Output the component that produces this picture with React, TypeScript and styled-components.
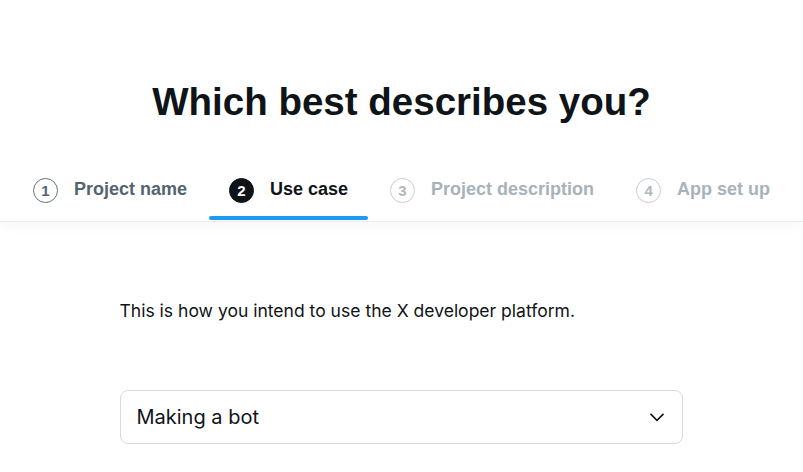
import React from "react";
import styled, { createGlobalStyle } from "styled-components";

const GlobalStyle = createGlobalStyle`
  html, body { margin: 0; padding: 0; background: #ffffff; }
  body { font-family: "Liberation Sans", Arial, sans-serif; color: #0f1419; }
  * { box-sizing: border-box; }
`;

const Page = styled.div`
  width: 100%;
  min-height: 472px;
  display: flex;
  flex-direction: column;
`;

const Header = styled.header`
  padding-top: 79px;
  display: flex;
  flex-direction: column;
  align-items: center;
  border-bottom: 1px solid #eaecee;
  box-shadow: 0 3px 14px rgba(0, 0, 0, 0.035);
`;

const Title = styled.h1`
  margin: 0;
  font-family: "Liberation Sans", Arial, sans-serif;
  font-weight: 700;
  font-size: 38.5px;
  line-height: 46px;
  color: #0f1419;
`;

const Tabs = styled.nav`
  margin-top: 44px;
  display: flex;
  justify-content: center;
  gap: 2px;
`;

type Status = "done" | "active" | "todo";

const TabItem = styled.div`
  display: flex;
  flex-direction: column;
`;

const TabRow = styled.div`
  height: 40px;
  padding: 0 20px;
  display: flex;
  align-items: center;
  gap: 16px;
`;

const Circle = styled.span<{ $status: Status }>`
  width: 25px;
  height: 25px;
  border-radius: 50%;
  display: flex;
  align-items: center;
  justify-content: center;
  font-family: "Liberation Sans", Arial, sans-serif;
  font-weight: 700;
  font-size: 15px;
  margin-top: 3px;
  border: 1.5px solid
    ${(p) => (p.$status === "active" ? "#0f1419" : p.$status === "done" ? "#66727c" : "#c7cdd2")};
  background: ${(p) => (p.$status === "active" ? "#0f1419" : "#ffffff")};
  color: ${(p) => (p.$status === "active" ? "#ffffff" : p.$status === "done" ? "#536471" : "#b0b8be")};
`;

const TabLabel = styled.span<{ $status: Status }>`
  font-family: "Liberation Sans", Arial, sans-serif;
  font-weight: 700;
  font-size: 18px;
  margin-top: 1px;
  color: ${(p) => (p.$status === "active" ? "#0f1419" : p.$status === "done" ? "#536471" : "#a9b2b9")};
`;

const Underline = styled.div<{ $visible: boolean }>`
  margin-top: 7px;
  margin-bottom: 1px;
  height: 4px;
  border-radius: 9999px;
  background: ${(p) => (p.$visible ? "#1d9bf0" : "transparent")};
`;

const Content = styled.main`
  width: 562px;
  margin: 0 auto;
  padding-top: 77px;
  display: flex;
  flex-direction: column;
`;

const Description = styled.p`
  margin: 0 0 0 -1px;
  font-family: Inter, "Noto Sans", sans-serif;
  font-size: 17.55px;
  line-height: 24px;
  color: #0f1419;
`;

const Select = styled.div`
  margin: 67px 0 0 -1px;
  height: 54px;
  border: 1px solid #d4dadd;
  border-radius: 8px;
  display: flex;
  align-items: center;
  justify-content: space-between;
  padding: 0 15px 0 16px;
`;

const SelectValue = styled.span`
  font-family: Inter, "Noto Sans", sans-serif;
  font-size: 20px;
  color: #0f1419;
`;

const Chevron = () => (
  <svg width="20" height="20" viewBox="0 0 24 24" aria-hidden="true">
    <path
      fill="#0f1419"
      d="M3.543 8.96l1.414-1.42L12 14.59l7.043-7.05 1.414 1.42L12 17.41 3.543 8.96z"
    />
  </svg>
);

const steps: { n: number; label: string; status: Status }[] = [
  { n: 1, label: "Project name", status: "done" },
  { n: 2, label: "Use case", status: "active" },
  { n: 3, label: "Project description", status: "todo" },
  { n: 4, label: "App set up", status: "todo" },
];

export default function App() {
  return (
    <Page>
      <GlobalStyle />
      <Header>
        <Title>Which best describes you?</Title>
        <Tabs>
          {steps.map((s) => (
            <TabItem key={s.n}>
              <TabRow>
                <Circle $status={s.status}>{s.n}</Circle>
                <TabLabel $status={s.status}>{s.label}</TabLabel>
              </TabRow>
              <Underline $visible={s.status === "active"} />
            </TabItem>
          ))}
        </Tabs>
      </Header>
      <Content>
        <Description>This is how you intend to use the X developer platform.</Description>
        <Select>
          <SelectValue>Making a bot</SelectValue>
          <Chevron />
        </Select>
      </Content>
    </Page>
  );
}
